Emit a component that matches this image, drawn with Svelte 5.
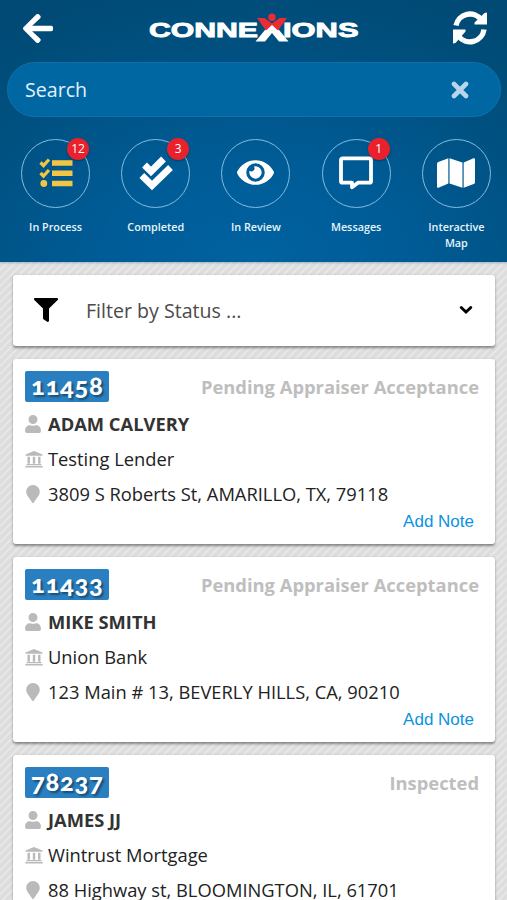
<script lang="ts">
    const tabs = [
        { icon: "tasks", label: "In Process", count: 12 },
        { icon: "checks", label: "Completed", count: 3 },
        { icon: "eye", label: "In Review", count: 0 },
        { icon: "message", label: "Messages", count: 1 },
        { icon: "map", label: "Interactive Map", count: 0 },
    ]

    const orders = [
        { id: "11458", status: "Pending Appraiser Acceptance", name: "ADAM CALVERY", lender: "Testing Lender", address: "3809 S Roberts St, AMARILLO, TX, 79118" },
        { id: "11433", status: "Pending Appraiser Acceptance", name: "MIKE SMITH", lender: "Union Bank", address: "123 Main # 13, BEVERLY HILLS, CA, 90210" },
        { id: "78237", status: "Inspected", name: "JAMES JJ", lender: "Wintrust Mortgage", address: "88 Highway st, BLOOMINGTON, IL, 61701" },
    ]

    let search = $state("")
</script>

<div class="app">
    <header>
        <div class="topbar">
            <button class="back" aria-label="Back">
                <svg viewBox="0 40 448 432" width="30" height="29"><path fill="#fff" d="M257.5 445.1l-22.2 22.2c-9.4 9.4-24.6 9.4-33.9 0L7 273c-9.4-9.4-9.4-24.6 0-33.9L201.4 44.7c9.4-9.4 24.6-9.4 33.9 0l22.2 22.2c9.5 9.5 9.3 25-.4 34.3L136.6 216H424c13.3 0 24 10.7 24 24v32c0 13.3-10.7 24-24 24H136.6l120.500 114.800c9.800 9.300 10 24.800.4 34.300z"/></svg>
            </button>
            <svg class="logo" viewBox="0 0 210 32" width="210" height="32">
                <text x="0" y="24" textLength="109" lengthAdjust="spacingAndGlyphs">CONNE</text>
                <text x="134" y="24" textLength="75.500" lengthAdjust="spacingAndGlyphs">IONS</text>
                <path fill="#fff" d="M106.500 28.500l11.500-14 5-3 5 3 11.500 14h-9.500l-7-8.500-7 8.500z"/>
                <path fill="#ee2b33" d="M108 5h7.500l7.500 5.500 7.500-5.500h7.500l-9 12.500-6-5.500-6 5.500z"/>
                <circle cx="123" cy="4.200" r="3.700" fill="#ee2b33"/>
            </svg>
            <button class="refresh" aria-label="Refresh">
                <svg viewBox="0 0 34 34" width="34" height="34">
                    <path fill="none" stroke="#fff" stroke-width="5.400" d="M3 14.500A14.200 14.200 0 0 1 28.500 9M31 18.500A14.200 14.200 0 0 1 5.500 25"/>
                    <path fill="#fff" d="M31.500 2L34 1.500V13.500H21.500v-2zM2.500 32L0 32.500V18.500h12.500v2z"/>
                </svg>
            </button>
        </div>

        <div class="search">
            <input type="text" placeholder="Search" bind:value={search} />
            <button class="clear" aria-label="Clear" onclick={() => (search = "")}>
                <svg viewBox="0 0 18 18" width="18" height="18"><path d="M3 3l12 12M15 3L3 15" stroke="#b7d6ea" stroke-width="4.600" stroke-linecap="round"/></svg>
            </button>
        </div>

        <nav>
            {#each tabs as tab}
                <a href="#{tab.icon}">
                    <span class="circle">
                        {#if tab.icon === "tasks"}
                            <svg viewBox="0 0 34 30" width="34" height="30" fill="none" stroke="#f3c544">
                                <path stroke-width="3.300" d="M1.500 4.500l3 3 5.500-6M1.500 15l3 3 5.500-6"/>
                                <path stroke-width="5.600" stroke-linejoin="round" d="M13 5h20.500M13 15.300h20.500M13 25.500h20.500"/>
                                <circle cx="4.800" cy="25.500" r="3.400" fill="#f3c544" stroke="none"/>
                            </svg>
                        {:else if tab.icon === "checks"}
                            <svg viewBox="0 0 34 34" width="34" height="34" fill="none" stroke="#fff" stroke-width="6.800">
                                <path d="M5.500 9l6.500 6.500L24.500 3"/>
                                <path d="M2.800 19.500l10.200 10L31.500 11.500"/>
                            </svg>
                        {:else if tab.icon === "eye"}
                            <svg viewBox="0 64 576 384" width="37" height="25"><path fill="#fff" d="M572.520 241.400C518.290 135.590 410.930 64 288 64S57.680 135.640 3.480 241.410a32.350 32.350 0 0 0 0 29.190C57.710 376.410 165.070 448 288 448s230.320-71.640 284.520-177.410a32.350 32.350 0 0 0 0-29.190zM288 400a144 144 0 1 1 144-144 143.930 143.930 0 0 1-144 144zm0-240a95.310 95.310 0 0 0-25.310 3.790 47.850 47.850 0 0 1-66.900 66.900A95.780 95.780 0 1 0 288 160z"/></svg>
                        {:else if tab.icon === "message"}
                            <svg viewBox="0 0 34 34" width="34" height="34"><path fill="none" stroke="#fff" stroke-width="3.800" stroke-linejoin="round" d="M3.500 2.300h27a1.500 1.500 0 0 1 1.500 1.500v21.400a1.500 1.500 0 0 1-1.500 1.500H19l-6 4.500v-4.500H3.500A1.500 1.500 0 0 1 2 25.200V3.800a1.500 1.500 0 0 1 1.500-1.500z"/></svg>
                        {:else}
                            <svg viewBox="0 32 576 448" width="38" height="30"><path fill="#fff" d="M0 117.660v346.320c0 11.320 11.430 19.060 21.940 14.860L172 416V32L20.120 87.950A32.006 32.006 0 0 0 0 117.660zM190 416l196 64V96L190 32v384zM554.060 33.160L404 96v384l151.880-55.950A31.996 31.996 0 0 0 576 394.340V48.020c0-11.320-11.430-19.060-21.940-14.860z"/></svg>
                        {/if}
                        {#if tab.count}
                            <span class="badge">{tab.count}</span>
                        {/if}
                    </span>
                    <span class="label">{tab.label}</span>
                </a>
            {/each}
        </nav>
    </header>

    <main>
        <div class="card filter">
            <svg viewBox="0 0 512 512" width="24" height="24"><path d="M487.976 0H24.028C2.710 0-8.047 25.866 7.058 40.971L192 225.941V432c0 7.831 3.821 15.170 10.237 19.662l80 55.980C298.020 518.690 320 507.493 320 487.980V225.941l184.947-184.970C520.021 25.896 509.338 0 487.976 0z"/></svg>
            <span>Filter by Status ...</span>
            <svg viewBox="0 0 14 10" width="14" height="10"><path d="M2.200 2.500L7 7l4.800-4.500" fill="none" stroke="#000" stroke-width="2.900" stroke-linecap="round"/></svg>
        </div>

        {#each orders as order}
            <div class="card order">
                <div class="head">
                    <span class="id">{order.id}</span>
                    <span class="status">{order.status}</span>
                </div>
                <div class="row name">
                    <svg viewBox="0 0 448 512" width="16" height="18"><path d="M224 256c70.700 0 128-57.300 128-128S294.700 0 224 0 96 57.300 96 128s57.300 128 128 128zm89.600 32h-16.700c-22.200 10.200-46.900 16-72.900 16s-50.600-5.800-72.900-16h-16.700C60.200 288 0 348.200 0 422.400V464c0 26.500 21.500 48 48 48h352c26.500 0 48-21.500 48-48v-41.600c0-74.200-60.200-134.400-134.400-134.400z"/></svg>
                    <span>{order.name}</span>
                </div>
                <div class="row">
                    <svg viewBox="0 0 18 17" width="18" height="17"><path d="M9 0l8.500 3.400v1.400H.5V3.400zM2.500 5.700h2.400v7H2.500zM7.800 5.700h2.400v7H7.800zM13.100 5.700h2.400v7h-2.400zM1.500 13h15v1.200h-15zM.3 15h17.400v1.600H.3z"/></svg>
                    <span>{order.lender}</span>
                </div>
                <div class="row address">
                    <svg viewBox="0 0 384 512" width="14" height="18"><path d="M172.268 501.670C26.970 291.031 0 269.413 0 192 0 85.961 85.961 0 192 0s192 85.961 192 192c0 77.413-26.970 99.031-172.268 309.670-9.535 13.774-29.930 13.773-39.464 0z"/></svg>
                    <span>{order.address}</span>
                </div>
                <button class="note">Add Note</button>
            </div>
        {/each}
    </main>
</div>

<style>
    :global(body) {
        background: #e1e1e1;
    }

    .app {
        height: 900px;
        overflow: hidden;
        font-family: "Open Sans", sans-serif;
        color: #222;
        background: repeating-linear-gradient(135deg, #dcdcdc 0, #dedede 3px, #e8e8e8 4px, #e8e8e8 4.800px, #dcdcdc 5.660px);
    }

    button {
        padding: 0;
        border: 0;
        background: none;
        display: flex;
        cursor: pointer;
    }

    header {
        height: 262px;
        box-sizing: border-box;
        background: radial-gradient(ellipse 420px 290px at 50% 100%, #0062a0 0%, #005c97 35%, #00507f 75%, #004a75 100%);
        box-shadow: 0 1px 2px #9bb4c4;
        position: relative;
    }

    .topbar {
        height: 62px;
        box-sizing: border-box;
        padding: 0 20px 6px 23px;
        display: flex;
        align-items: center;
        justify-content: space-between;
    }

    .logo {
        margin: 2px 0 0 1px;
    }

    .logo text {
        font: bold 20.500px "Liberation Sans", sans-serif;
        fill: #fff;
        stroke: #fff;
        stroke-width: 0.900px;
    }

    .search {
        height: 55px;
        margin: 0 6px 0 7px;
        padding: 0 31px 0 17px;
        box-sizing: border-box;
        border: 1px solid #1170a6;
        border-radius: 28px;
        background: #0067a3;
        display: flex;
        align-items: center;
    }

    input {
        flex: 1;
        min-width: 0;
        padding: 0;
        border: 0;
        outline: 0;
        background: none;
        color: #fff;
        font: 19.600px "Open Sans", sans-serif;
    }

    input::placeholder {
        color: #e3f1fa;
        opacity: 1;
    }

    nav {
        display: flex;
        padding: 22px 0 0 5.500px;
        margin-right: -6px;
    }

    nav a {
        width: 100.200px;
        flex: none;
        display: flex;
        flex-direction: column;
        align-items: center;
        text-decoration: none;
        color: #e8f4fb;
    }

    .circle {
        width: 69px;
        height: 69px;
        box-sizing: border-box;
        padding-bottom: 2px;
        border: 1px solid #83bde0;
        border-radius: 50%;
        display: flex;
        align-items: center;
        justify-content: center;
        position: relative;
    }

    .badge {
        position: absolute;
        top: -2px;
        right: 0;
        width: 22px;
        height: 22px;
        border-radius: 50%;
        background: #e8212d;
        color: #fff;
        font-size: 12px;
        line-height: 22px;
        text-align: center;
        box-shadow: 0 1px 2px rgba(0, 0, 0, 0.3);
    }

    .label {
        width: 70px;
        margin-top: 11px;
        font-size: 10.800px;
        font-weight: 600;
        line-height: 16px;
        text-align: center;
    }

    main {
        padding: 13px 12px 0 13px;
    }

    .card {
        box-sizing: border-box;
        margin-bottom: 13px;
        background: #fff;
        border-radius: 3px;
        box-shadow: 0 1.500px 2.500px rgba(0, 0, 0, 0.4);
    }

    .filter {
        height: 71px;
        padding: 0 22px 1px 21px;
        display: flex;
        align-items: center;
        font-size: 19.600px;
        color: #4b4b4b;
    }

    .filter span {
        flex: 1;
        margin-left: 28px;
    }

    .order {
        height: 185px;
        padding: 12px 16px 0 12px;
    }

    .head {
        display: flex;
        justify-content: space-between;
        height: 34px;
    }

    .id {
        height: 31px;
        padding: 0 5.500px 0 6px;
        border-radius: 2px;
        background: #2a7fc0;
        color: #fff;
        font: 900 25.500px/29px Lato, sans-serif;
        font-variant-numeric: oldstyle-nums;
        letter-spacing: 0.700px;
        text-shadow: 2px 2px 2px rgba(0, 0, 0, 0.4);
    }

    .status {
        line-height: 32px;
        font-size: 18.350px;
        font-weight: 700;
        color: #bebebe;
    }

    .row {
        height: 35px;
        display: flex;
        align-items: center;
        font-size: 18.320px;
        white-space: nowrap;
    }

    .row svg {
        flex: none;
        width: 18px;
        margin: 2px 5px 0 0;
        fill: #bababa;
    }

    .name svg,
    .address svg {
        margin: 1px 6px 0 -1px;
    }

    .name {
        height: 36px;
        font-weight: 700;
        color: #333;
    }

    .address {
        height: 34px;
    }

    .note {
        margin: 2px 5px 0 auto;
        color: #0b93e3;
        font: 17px/20px "Liberation Sans", sans-serif;
    }
</style>
